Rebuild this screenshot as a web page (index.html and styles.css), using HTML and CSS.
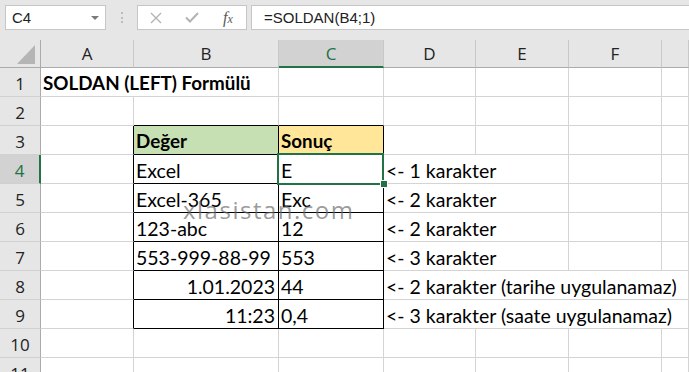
FILE: index.html
```html
<!DOCTYPE html>
<html lang="tr">
<head>
    <meta charset="UTF-8">
    <meta name="viewport" content="width=device-width, initial-scale=1.0">
    <title>SOLDAN (LEFT) Formülü</title>
    <link rel="stylesheet" href="styles.css">
</head>
<body>
    <div class="app">
        <div class="toolbar">
            <div class="name-box">
                <span>C4</span>
                <svg width="8" height="4" viewBox="0 0 8 4"><polygon points="0,0 8,0 4,4" fill="#7a7a7a"/></svg>
            </div>
            <div class="grip"><span></span><span></span><span></span></div>
            <div class="fx-buttons">
                <span class="fx-slot">
                    <svg width="12" height="12" viewBox="0 0 12 12"><path d="M1 1 L11 11 M11 1 L1 11" stroke="#b3b3b3" stroke-width="1.4" fill="none"/></svg>
                </span>
                <span class="fx-slot">
                    <svg width="14" height="11" viewBox="0 0 14 11"><path d="M1 5.5 L5 9.5 L13 1" stroke="#b3b3b3" stroke-width="2" fill="none"/></svg>
                </span>
                <span class="fx-slot fx-label"><i>f<small>x</small></i></span>
            </div>
            <div class="formula">=SOLDAN(B4;1)</div>
        </div>

        <div class="sheet">
            <!-- column headers -->
            <div class="corner">
                <svg width="40" height="27" viewBox="0 0 40 27"><polygon points="35,5 35,24 17,24" fill="#b5b5b5"/></svg>
            </div>
            <div class="ch">A</div>
            <div class="ch">B</div>
            <div class="ch sel">C</div>
            <div class="ch">D</div>
            <div class="ch">E</div>
            <div class="ch">F</div>
            <div class="ch"></div>

            <!-- 1 -->
            <div class="rh">1</div>
            <div class="c b span2">SOLDAN (LEFT) Formülü</div>
            <div class="c"></div>
            <div class="c"></div>
            <div class="c"></div>
            <div class="c"></div>
            <div class="c"></div>

            <!-- 2 -->
            <div class="rh">2</div>
            <div class="c"></div>
            <div class="c above"></div>
            <div class="c above"></div>
            <div class="c"></div>
            <div class="c"></div>
            <div class="c"></div>
            <div class="c"></div>

            <!-- 3 -->
            <div class="rh">3</div>
            <div class="c edge"></div>
            <div class="c t b green">Değer</div>
            <div class="c t b yellow">Sonuç</div>
            <div class="c"></div>
            <div class="c"></div>
            <div class="c"></div>
            <div class="c"></div>

            <!-- 4 -->
            <div class="rh sel">4</div>
            <div class="c edge"></div>
            <div class="c t">Excel</div>
            <div class="c t active">E</div>
            <div class="c span2">&lt;- 1 karakter</div>
            <div class="c"></div>
            <div class="c"></div>

            <!-- 5 -->
            <div class="rh">5</div>
            <div class="c edge"></div>
            <div class="c t">Excel-365</div>
            <div class="c t">Exc</div>
            <div class="c span2">&lt;- 2 karakter</div>
            <div class="c"></div>
            <div class="c"></div>

            <!-- 6 -->
            <div class="rh">6</div>
            <div class="c edge"></div>
            <div class="c t">123-abc</div>
            <div class="c t">12</div>
            <div class="c span2">&lt;- 2 karakter</div>
            <div class="c"></div>
            <div class="c"></div>

            <!-- 7 -->
            <div class="rh">7</div>
            <div class="c edge"></div>
            <div class="c t">553-999-88-99</div>
            <div class="c t">553</div>
            <div class="c span2">&lt;- 3 karakter</div>
            <div class="c"></div>
            <div class="c"></div>

            <!-- 8 -->
            <div class="rh">8</div>
            <div class="c edge"></div>
            <div class="c t r">1.01.2023</div>
            <div class="c t">44</div>
            <div class="c span4">&lt;- 2 karakter (tarihe uygulanamaz)</div>

            <!-- 9 -->
            <div class="rh">9</div>
            <div class="c edge"></div>
            <div class="c t r">11:23</div>
            <div class="c t">0,4</div>
            <div class="c span4">&lt;- 3 karakter (saate uygulanamaz)</div>

            <!-- 10 -->
            <div class="rh">10</div>
            <div class="c"></div>
            <div class="c"></div>
            <div class="c"></div>
            <div class="c"></div>
            <div class="c"></div>
            <div class="c"></div>
            <div class="c"></div>

            <!-- 11 -->
            <div class="rh">11</div>
            <div class="c"></div>
            <div class="c"></div>
            <div class="c"></div>
            <div class="c"></div>
            <div class="c"></div>
            <div class="c"></div>
            <div class="c"></div>
        </div>

        <div class="watermark">xlasistan.com</div>
    </div>
</body>
</html>
```

FILE: styles.css
```css
* {
    box-sizing: border-box;
}

body {
    margin: 0;
    width: 689px;
    height: 372px;
    overflow: hidden;
    background-color: #fff;
}

.app {
    position: relative;
    height: 372px;
}

/* formula bar */
.toolbar {
    height: 40px;
    display: flex;
    padding: 5px 0 0 5px;
    background-color: #e6e6e6;
    font-family: "Liberation Sans", Arial, sans-serif;
    font-size: 15px;
    color: #222;
}

.name-box {
    width: 101px;
    height: 25px;
    display: flex;
    align-items: center;
    justify-content: space-between;
    padding: 0 6px 0 6px;
    background-color: #fff;
    border: 1px solid #c6c6c6;
}

.grip {
    width: 31px;
    display: flex;
    flex-direction: column;
    align-items: center;
    gap: 2.5px;
    padding-top: 7px;
}

.grip span {
    width: 2px;
    height: 2px;
    background-color: #bcbcbc;
}

.fx-buttons {
    width: 110px;
    height: 25px;
    display: flex;
    background-color: #fff;
    border: 1px solid #c6c6c6;
}

.fx-slot {
    width: 36px;
    display: flex;
    align-items: center;
    justify-content: center;
}

.fx-label {
    font-family: "Liberation Serif", "Times New Roman", serif;
    font-size: 16px;
    color: #5a5a5a;
}

.fx-label small {
    font-size: 12px;
}

.formula {
    flex: 1;
    height: 25px;
    margin-left: 4px;
    padding-left: 12px;
    display: flex;
    align-items: center;
    background-color: #fff;
    border: 1px solid #c6c6c6;
    border-right: none;
}

/* grid */
.sheet {
    display: grid;
    grid-template-columns: 41px 93px 145px 105px 92px 93px 93px 1fr;
    grid-template-rows: 28px repeat(11, 29px);
    font-family: Lato, "Noto Sans", sans-serif;
    font-size: 19.5px;
    color: #000;
}

.corner,
.ch,
.rh {
    background-color: #e6e6e6;
    font-family: "Open Sans", sans-serif;
    font-size: 17px;
    color: #222;
}

.corner {
    border-right: 1px solid #ababab;
    border-bottom: 1px solid #ababab;
}

.corner svg {
    display: block;
}

.ch {
    display: flex;
    align-items: center;
    justify-content: center;
    border-right: 1px solid #c8c8c8;
    border-bottom: 1px solid #ababab;
}

.rh {
    display: flex;
    align-items: center;
    justify-content: center;
    padding-top: 3px;
    border-right: 1px solid #ababab;
    border-bottom: 1px solid #d0d0d0;
}

.ch.sel {
    background-color: #d2d2d2;
    color: #217346;
    border-bottom: 2px solid #217346;
}

.rh.sel {
    background-color: #d2d2d2;
    color: #217346;
    border-right: 2px solid #217346;
}

.c {
    display: flex;
    align-items: flex-end;
    padding: 0 3px 3px 2px;
    line-height: 1;
    white-space: nowrap;
    border-right: 1px solid #d4d4d4;
    border-bottom: 1px solid #d4d4d4;
}

.span2 {
    grid-column: span 2;
}

.span4 {
    grid-column: span 4;
}

.b {
    font-weight: bold;
    font-size: 18.8px;
}

.r {
    justify-content: flex-end;
}

/* bordered table B3:C9 */
.c.t {
    border-right-color: #000;
    border-bottom-color: #000;
}

.c.edge {
    border-right-color: #000;
}

.c.above {
    border-bottom-color: #000;
}

.green {
    background-color: #c6e0b4;
}

.yellow {
    background-color: #ffe699;
}

/* selected cell C4 */
.active {
    position: relative;
}

.active::after {
    content: "";
    position: absolute;
    left: -2px;
    top: -2px;
    right: -1px;
    bottom: -2px;
    border: 2px solid #217346;
}

.active::before {
    content: "";
    position: absolute;
    right: -4px;
    bottom: -4px;
    width: 6px;
    height: 6px;
    background-color: #217346;
    outline: 1px solid #fff;
    z-index: 1;
}

.watermark {
    position: absolute;
    left: 183px;
    top: 193px;
    font-family: "Open Sans", sans-serif;
    font-size: 24px;
    letter-spacing: 1.5px;
    color: rgba(105, 105, 105, 0.68);
    pointer-events: none;
}
```
